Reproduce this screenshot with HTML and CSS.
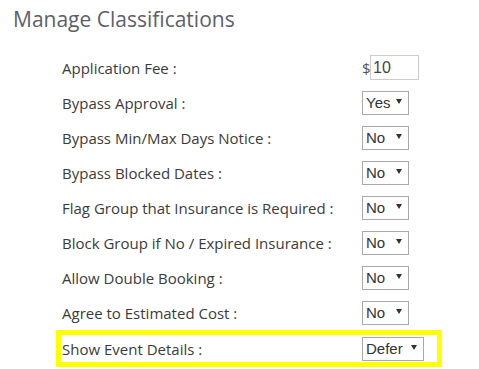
FILE: index.html
```html
<!DOCTYPE html>
<html lang="en">
<head>
<meta charset="UTF-8">
<title>Manage Classifications</title>
<link rel="stylesheet" href="styles.css">
</head>
<body>
  <h2 class="page-title">Manage Classifications</h2>
  <div class="settings">
    <div class="row">
      <span class="label">Application Fee :</span>
      <span class="value"><span class="currency">$</span><input class="fee" type="text" value="10"></span>
    </div>
    <div class="row">
      <span class="label">Bypass Approval :</span>
      <span class="value"><span class="select">Yes</span></span>
    </div>
    <div class="row">
      <span class="label">Bypass Min/Max Days Notice :</span>
      <span class="value"><span class="select">No</span></span>
    </div>
    <div class="row">
      <span class="label">Bypass Blocked Dates :</span>
      <span class="value"><span class="select">No</span></span>
    </div>
    <div class="row">
      <span class="label">Flag Group that Insurance is Required :</span>
      <span class="value"><span class="select">No</span></span>
    </div>
    <div class="row">
      <span class="label">Block Group if No / Expired Insurance :</span>
      <span class="value"><span class="select">No</span></span>
    </div>
    <div class="row">
      <span class="label">Allow Double Booking :</span>
      <span class="value"><span class="select">No</span></span>
    </div>
    <div class="row">
      <span class="label">Agree to Estimated Cost :</span>
      <span class="value"><span class="select">No</span></span>
    </div>
    <div class="row highlight">
      <span class="label">Show Event Details :</span>
      <span class="value"><span class="select wide">Defer</span></span>
    </div>
  </div>
</body>
</html>
```

FILE: styles.css
```css
body {
  margin: 0;
  padding: 0;
  font-family: "Open Sans", "Noto Sans", sans-serif;
  background-color: #ffffff;
  color: #3b3b3b;
}

.page-title {
  margin: 0;
  height: 50px;
  padding: 5px 0 0 13px;
  box-sizing: border-box;
  font-size: 21px;
  font-weight: 400;
  color: #5d6166;
}

.settings {
  margin-left: 56px;
  width: 386px;
}

.row {
  display: flex;
  align-items: center;
  height: 35px;
  padding-left: 6px;
  box-sizing: border-box;
}

.row.highlight {
  height: 37px;
  border: 5px solid #ffff00;
  padding-left: 1px;
}

.label {
  width: 300px;
  font-size: 15px;
  white-space: nowrap;
}

.value {
  display: flex;
  align-items: center;
}

.currency {
  font-size: 15px;
  color: #555555;
  width: 8px;
}

.fee {
  width: 49px;
  height: 25px;
  box-sizing: border-box;
  margin: 0;
  padding: 0 0 0 2px;
  border: 1px solid #cccccc;
  font-family: "Liberation Sans", Arial, sans-serif;
  font-size: 16px;
  color: #444444;
}

.select {
  position: relative;
  display: block;
  width: 47px;
  height: 24px;
  line-height: 22px;
  box-sizing: border-box;
  padding-left: 3px;
  border: 1px solid #a9a9a9;
  font-family: "Liberation Sans", Arial, sans-serif;
  font-size: 15px;
  color: #333333;
  background-color: #ffffff;
}

.select.wide {
  width: 62px;
}

.select::after {
  content: "";
  position: absolute;
  right: 6px;
  top: 7px;
  border-left: 3px solid transparent;
  border-right: 3px solid transparent;
  border-top: 5px solid #333333;
}
```
